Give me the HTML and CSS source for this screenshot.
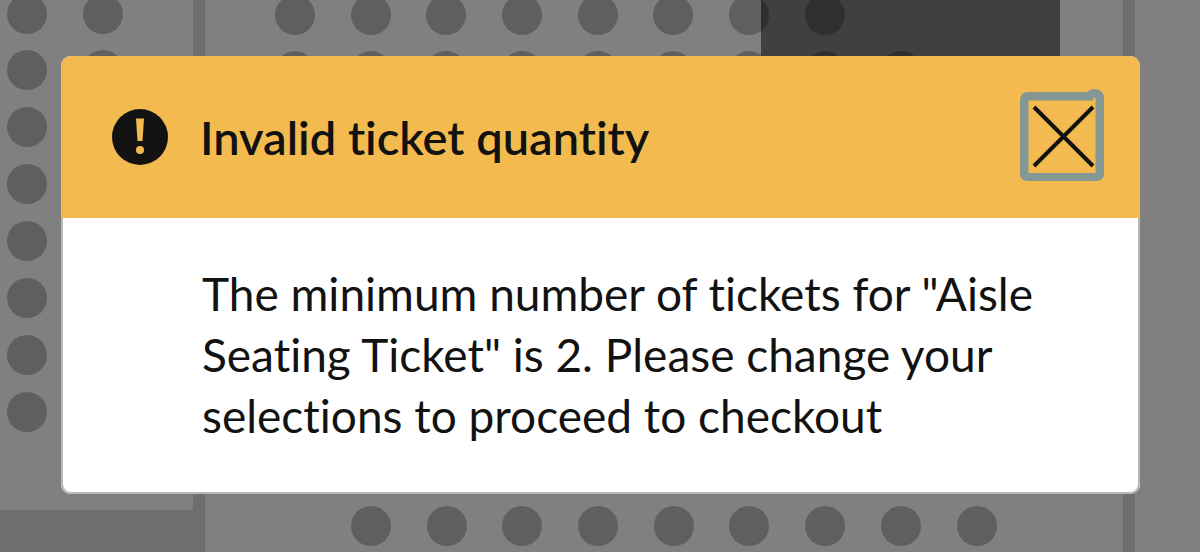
FILE: index.html
```
<!DOCTYPE html>
<html lang="en">

<head>
    <meta charset="UTF-8">
    <meta name="viewport" content="width=device-width, initial-scale=1.0">
    <title>Invalid ticket quantity</title>
    <link rel="stylesheet" href="styles.css">
</head>

<body>
    <!-- Seat map behind the dialog -->
    <svg class="seat-map" width="1200" height="552" aria-hidden="true">
        <defs>
            <circle id="seat" r="20" />
            <g id="seat-row">
                <use href="#seat" x="295" />
                <use href="#seat" x="371" />
                <use href="#seat" x="446" />
                <use href="#seat" x="522" />
                <use href="#seat" x="598" />
                <use href="#seat" x="673" />
                <use href="#seat" x="749" />
                <use href="#seat" x="825" />
            </g>
        </defs>
        <g class="aisle">
            <rect x="193" y="0" width="12" height="552" />
            <rect x="0" y="510" width="205" height="42" />
            <rect x="1123" y="0" width="12" height="552" />
        </g>
        <g class="seats">
            <use href="#seat" x="27" y="14" />
            <use href="#seat" x="27" y="70" />
            <use href="#seat" x="27" y="127" />
            <use href="#seat" x="27" y="184" />
            <use href="#seat" x="27" y="241" />
            <use href="#seat" x="27" y="298" />
            <use href="#seat" x="27" y="355" />
            <use href="#seat" x="27" y="412" />
            <use href="#seat" x="103" y="14" />
            <use href="#seat" x="103" y="70" />
            <use href="#seat-row" y="15" />
            <use href="#seat-row" y="71" />
            <use href="#seat" x="901" y="71" />
            <use href="#seat-row" x="76" y="526" />
            <use href="#seat" x="977" y="526" />
        </g>
        <rect class="stage" x="761" y="0" width="299" height="100" />
    </svg>

    <div class="dialog" role="alertdialog" aria-labelledby="dialogTitle" aria-describedby="dialogText">
        <div class="dialog-header">
            <svg class="alert-icon" width="56" height="56" viewBox="0 0 56 56" aria-hidden="true">
                <circle cx="28" cy="28" r="28" fill="#121212" />
                <path d="M24 9.500h8l-1.500 22.500h-5z" fill="#f3bb4f" />
                <circle cx="28" cy="41" r="4" fill="#f3bb4f" />
            </svg>
            <h2 id="dialogTitle">Invalid ticket quantity</h2>
            <button type="button" class="close-button" aria-label="Close">
                <svg width="84" height="93" viewBox="0 0 84 93" aria-hidden="true">
                    <path d="M8 2H67Q70 -1 74 -1Q84 -1 84 9V83Q84 91 76 91H8Q0 91 0 83V11Q0 2 8 2ZM8.500 10.500V83H75.500V8H73V10.500Z" fill="#859795" fill-rule="evenodd" />
                    <path d="M14 17L73 76M73 17L14 76" fill="none" stroke="#121212" stroke-width="4" />
                </svg>
            </button>
        </div>
        <div class="dialog-body">
            <p id="dialogText">The minimum number of tickets for "Aisle Seating Ticket" is 2. Please change your selections to proceed to checkout</p>
        </div>
    </div>

    <script>
        document.querySelector('.close-button').addEventListener('click', function () {
            document.querySelector('.dialog').hidden = true;
        });
    </script>
</body>

</html>
```
FILE: styles.css
```
body {
    font-family: Lato, "Liberation Sans", sans-serif;
    font-size: 46px;
    font-variant-ligatures: none;
    background-color: #808080;
    color: #121212;
    margin: 0;
    padding: 56px 60px 56px 61px;
}

.seat-map {
    position: fixed;
    top: 0;
    left: 0;
    z-index: -1;
}

.aisle {
    fill: #6e6e6e;
}

.seats {
    fill: #5f5f5f;
}

.stage {
    fill: #000;
    fill-opacity: 0.5;
}

.dialog {
    background-color: #fff;
    border-radius: 10px;
    box-shadow: inset 0 0 0 2px #b8bab9;
    overflow: hidden;
}

.dialog-header {
    display: flex;
    align-items: center;
    gap: 32px;
    padding: 34px 36px 35px 51px;
    background-color: #f3bb4f;
}

.alert-icon {
    flex: none;
}

h2 {
    flex: 1;
    margin: 0;
    font-size: 47px;
    font-weight: 600;
    line-height: 60px;
}

.close-button {
    display: block;
    padding: 0;
    border: none;
    background: none;
    cursor: pointer;
}

.close-button svg {
    display: block;
    overflow: visible;
}

.dialog-body {
    padding: 45px 72px 48px 141px;
}

.dialog-body p {
    margin: 0;
    line-height: 61px;
}
```
